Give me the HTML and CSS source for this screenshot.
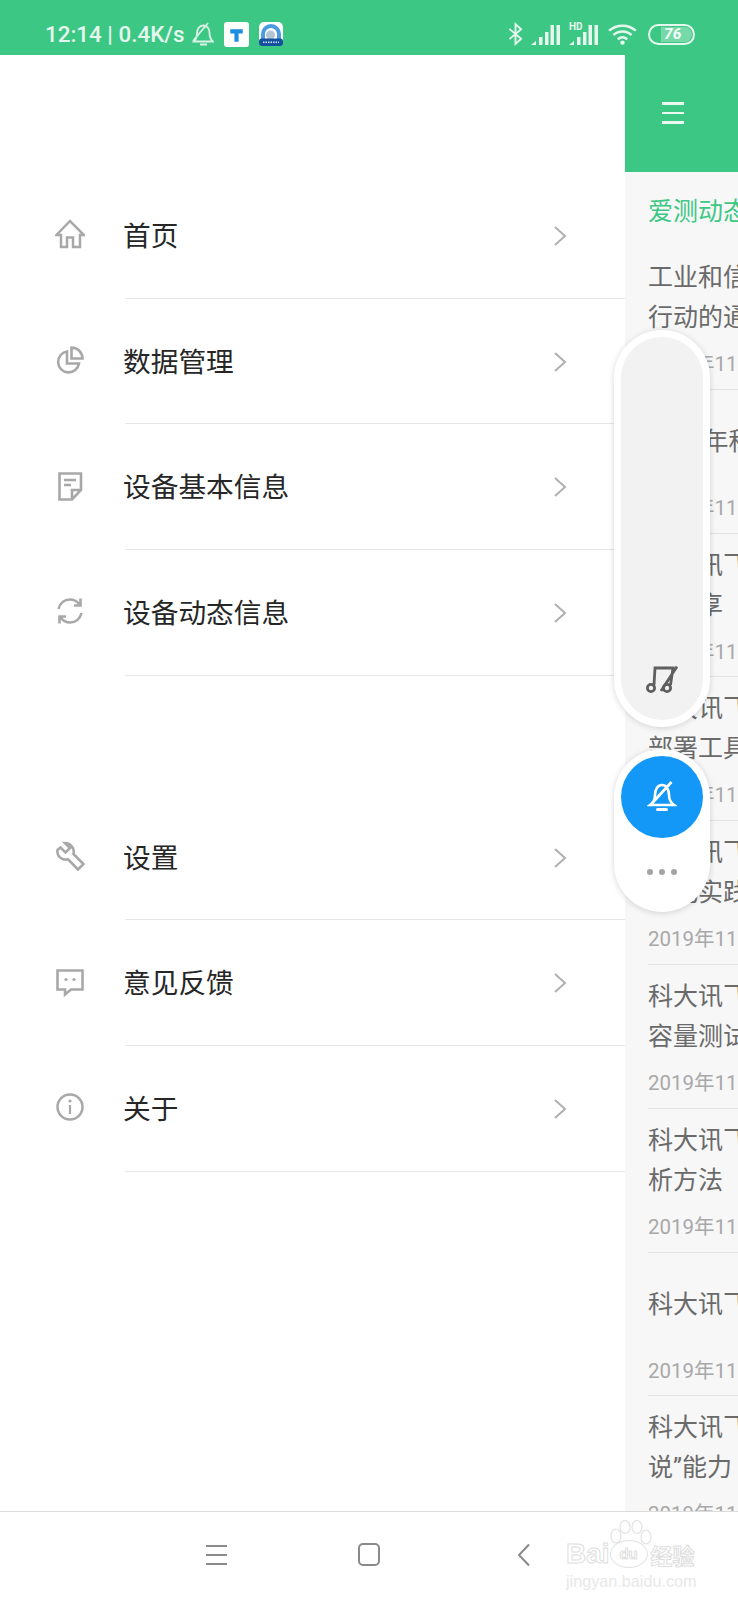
FILE: index.html
```html
<!DOCTYPE html>
<html lang="zh">
<head>
<meta charset="utf-8">
<title>爱测</title>
<link rel="stylesheet" href="styles.css">
</head>
<body>
<div class="screen">
  <header class="status">
    <div class="status-left">
      <span class="clock">12:14 | 0.4K/s</span>
      <svg class="ic-mute" viewBox="0 0 22 24"><path d="M2 19.500h19c-2.500-2-3.500-5-3.500-9C17.500 6 14.500 3.500 11 3.500S5 7 5 11c0 4-1 6.500-3 8.500zM8 22.500h7M1 19 16 1" fill="none" stroke="#d8f3e5" stroke-width="1.800"/></svg>
      <span class="app-t"><svg viewBox="0 0 24 24"><path d="M6 7h12v4h-4v8h-4v-8H6z" fill="#1a8fe3"/></svg></span>
      <span class="app-u"><svg viewBox="0 0 24 24"><rect width="24" height="24" rx="5" fill="#fff"/><path d="M2 17V12a10 10 0 0 1 20 0v5h-4v-5a6 6 0 0 0-12 0v5z" fill="#4a9be0"/><circle cx="11.500" cy="13" r="4.500" fill="#b4c3d1"/><rect y="16.500" width="24" height="7.500" rx="3" fill="#14509e"/><path d="M4 20.300h16" stroke="#cfe2f5" stroke-width="1.500" stroke-dasharray="1.500 1"/></svg></span>
    </div>
    <div class="status-right">
      <svg class="ic-bt" viewBox="0 0 16 24"><path d="M1.500 6.500 14 17l-6 5.500V1.500L14 7 1.500 17.500" fill="none" stroke="#e6f8ee" stroke-width="2"/></svg>
      <svg class="ic-sig" viewBox="0 0 29 21"><path d="M0 21l5-4v4zM8 13h3.500v8H8zM14 8h3.500v13H14zM19.500 1H23v20h-3.500zM25.500 1H29v20h-3.500z" fill="#e6f8ee"/></svg>
      <span class="hd-wrap"><span class="hd">HD</span><svg class="ic-sig" viewBox="0 0 29 21"><path d="M0 21l5-4v4zM8 13h3.500v8H8zM14 8h3.500v13H14zM19.500 1H23v20h-3.500zM25.500 1H29v20h-3.500z" fill="#e6f8ee"/></svg></span>
      <svg class="ic-wifi" viewBox="0 0 30 22"><g fill="none" stroke="#e6f8ee" stroke-width="2.600"><path d="M1 7c8-7 20-7 28 0M5.500 11.500c5.500-5 13.500-5 19 0M10 16c3-2.500 7-2.500 10 0"/></g><circle cx="15" cy="19.500" r="2.300" fill="#e6f8ee"/></svg>
      <span class="batt"><span class="batt-fill">76</span></span>
    </div>
  </header>

  <div class="stage">
    <nav class="drawer">
      <ul class="menu">
        <li class="row">
          <svg class="ic" viewBox="0 0 30 30"><path d="M15 2 1.500 16h4.500v12h6V18.500h6V28h7V16H29z" fill="none" stroke="#a8a8a8" stroke-width="2.500"/></svg>
          <span class="label">首页</span>
          <svg class="chev" viewBox="0 0 14 24"><path d="M2 3l10 9-10 9" fill="none" stroke="#b0b0b0" stroke-width="2"/></svg>
        </li>
        <li class="row">
          <svg class="ic" viewBox="0 0 30 30"><path d="M12 6.500a10.500 10.500 0 1 0 12 12H12z M16.500 2.500a11 11 0 0 1 11 11h-11z" fill="none" stroke="#a8a8a8" stroke-width="2.600"/></svg>
          <span class="label">数据管理</span>
          <svg class="chev" viewBox="0 0 14 24"><path d="M2 3l10 9-10 9" fill="none" stroke="#b0b0b0" stroke-width="2"/></svg>
        </li>
        <li class="row">
          <svg class="ic" viewBox="0 0 30 30"><path d="M26 19V2.500H4.500v26H17zM26 19h-9v9.500M9 9h12M9 14h7" fill="none" stroke="#a8a8a8" stroke-width="2.600"/></svg>
          <span class="label">设备基本信息</span>
          <svg class="chev" viewBox="0 0 14 24"><path d="M2 3l10 9-10 9" fill="none" stroke="#b0b0b0" stroke-width="2"/></svg>
        </li>
        <li class="row">
          <svg class="ic" viewBox="0 0 30 30"><path d="M3.500 13C5 7 9.500 3.500 15 3.500c4 0 7 1.700 9.500 5M26.500 17C25 23 20.500 26.500 15 26.500c-4 0-7-1.700-9.500-5M25.500 2.500V9.500h-6.500M4.500 27.500v-7h6.500" fill="none" stroke="#a8a8a8" stroke-width="2.600"/></svg>
          <span class="label">设备动态信息</span>
          <svg class="chev" viewBox="0 0 14 24"><path d="M2 3l10 9-10 9" fill="none" stroke="#b0b0b0" stroke-width="2"/></svg>
        </li>
      </ul>
      <ul class="menu menu-2">
        <li class="row">
          <svg class="ic" viewBox="0 0 30 30"><path d="M10 2 15 7l-4.500 4.500-5-5L2.500 9c-.5 4 1.500 7.500 5 9 2 .8 4 .8 5.500.3L23 28.500l5.500-5.500L18.500 13c.5-2 .3-4.300-.8-6.300C16 3.700 13.500 2 10 2z" fill="none" stroke="#a8a8a8" stroke-width="2.600"/></svg>
          <span class="label">设置</span>
          <svg class="chev" viewBox="0 0 14 24"><path d="M2 3l10 9-10 9" fill="none" stroke="#b0b0b0" stroke-width="2"/></svg>
        </li>
        <li class="row">
          <svg class="ic" viewBox="0 0 30 30"><path d="M2.500 3.500h25v19H16l-6 5v-5H2.500z" fill="none" stroke="#a8a8a8" stroke-width="2.600"/><circle cx="11" cy="12.500" r="1.600" fill="#a8a8a8"/><circle cx="19" cy="12.500" r="1.600" fill="#a8a8a8"/></svg>
          <span class="label">意见反馈</span>
          <svg class="chev" viewBox="0 0 14 24"><path d="M2 3l10 9-10 9" fill="none" stroke="#b0b0b0" stroke-width="2"/></svg>
        </li>
        <li class="row">
          <svg class="ic" viewBox="0 0 30 30"><circle cx="15" cy="15" r="12.500" fill="none" stroke="#a8a8a8" stroke-width="2.500"/><path d="M15 13v9" stroke="#a8a8a8" stroke-width="2.200"/><circle cx="15" cy="9" r="1.600" fill="#a8a8a8"/></svg>
          <span class="label">关于</span>
          <svg class="chev" viewBox="0 0 14 24"><path d="M2 3l10 9-10 9" fill="none" stroke="#b0b0b0" stroke-width="2"/></svg>
        </li>
      </ul>
    </nav>

    <main class="peek">
      <div class="peek-bar">
        <span class="burger"><i></i><i></i><i></i></span>
      </div>
      <div class="peek-body">
        <h2 class="peek-title">爱测动态</h2>
        <article class="news"><p>工业和信息化部<br>行动的通知</p><time>2019年11月</time></article>
        <article class="news news-single"><p>2019年科大讯飞</p><time>2019年11月</time></article>
        <article class="news"><p>科大讯飞实践<br>与分享</p><time>2019年11月</time></article>
        <article class="news"><p>科大讯飞测试<br>部署工具</p><time>2019年11月</time></article>
        <article class="news"><p>科大讯飞测试<br>优化实践</p><time>2019年11月</time></article>
        <article class="news"><p>科大讯飞测试<br>容量测试</p><time>2019年11月</time></article>
        <article class="news"><p>科大讯飞测试<br>析方法</p><time>2019年11月</time></article>
        <article class="news news-single"><p>科大讯飞测试</p><time>2019年11月</time></article>
        <article class="news"><p>科大讯飞测试<br>说<span class="q">”</span>能力</p><time>2019年11月</time></article>
      </div>
    </main>

    <aside class="float-music">
      <svg viewBox="0 0 32 30"><circle cx="5" cy="23" r="3.600" fill="none" stroke="#5f5f5f" stroke-width="2.800"/><circle cx="21" cy="23" r="3.600" fill="none" stroke="#5f5f5f" stroke-width="2.800"/><path d="M8 20 9 3H27L24.500 20M31 1.500 15 26" fill="none" stroke="#5f5f5f" stroke-width="2.800"/></svg>
    </aside>
    <aside class="float-bell">
      <span class="bell-disc"><svg viewBox="0 0 30 32"><path d="M3 24c3-2 5-5 5-10C8 8 11 4 15 4s7 4 7 10c0 5 2 8 5 10zM24.500 1 3 24.500" fill="none" stroke="#fff" stroke-width="2.600"/><path d="M10.500 28.500h9" stroke="#fff" stroke-width="3" stroke-linecap="round"/></svg></span>
      <span class="dots"><i></i><i></i><i></i></span>
    </aside>
  </div>

  <footer class="navbar">
    <span class="nav-burger"><i></i><i></i><i></i></span>
    <span class="nav-home"></span>
    <svg class="nav-back" viewBox="0 0 14 24"><path d="M12 1.500 2 12l10 10.500" fill="none" stroke="#8a8a8a" stroke-width="2"/></svg>
    <div class="wm">
      <svg class="wm-paw" viewBox="0 0 42 38"><g fill="#fff" stroke="#e2e2e2" stroke-width="1.200"><ellipse cx="6" cy="16" rx="5" ry="7"/><ellipse cx="15" cy="7" rx="5" ry="6.500"/><ellipse cx="27" cy="7" rx="5" ry="6.500"/><ellipse cx="36" cy="17" rx="5" ry="7"/></g></svg>
      <div class="wm-top"><span>Bai</span><span class="wm-du">du</span><span class="wm-cn">经验</span></div>
      <span class="wm-sub">jingyan.baidu.com</span>
    </div>
  </footer>
</div>
</body>
</html>
```

FILE: styles.css
```css
* { box-sizing: border-box; margin: 0; padding: 0; }
html, body { width: 738px; height: 1600px; overflow: hidden; background: #fff; }
body { font-family: "Noto Sans CJK SC", "Noto Sans", sans-serif; }
ul { list-style: none; }
.screen { width: 738px; height: 1600px; display: flex; flex-direction: column; }

.status { height: 55px; flex: none; background: #3dc785; display: flex; justify-content: space-between; align-items: center; padding: 13px 43px 0 45px; color: #e6f8ee; }
.status-left, .status-right { display: flex; align-items: center; }
.clock { font-family: Roboto, sans-serif; font-size: 22.400px; font-weight: 500; white-space: nowrap; }
.ic-mute { width: 22px; height: 24px; margin-left: 7px; }
.app-t { width: 25px; height: 25px; border-radius: 3px; background: #fff; margin-left: 10px; display: flex; }
.app-t svg { width: 25px; height: 25px; }
.app-u { width: 24px; height: 24px; margin-left: 10px; display: flex; }
.app-u svg { width: 24px; height: 24px; }
.ic-bt { width: 15px; height: 24px; margin-right: 8px; }
.ic-sig { width: 29px; height: 21px; display: block; }
.hd-wrap { position: relative; margin-left: 9px; }
.hd { position: absolute; left: 0; top: -2px; font: 700 10px/10px Roboto, sans-serif; background: #3dc785; padding-right: 2px; }
.ic-wifi { width: 29px; height: 21px; margin-left: 10px; }
.batt { width: 47px; height: 21px; margin-left: 11px; border: 2px solid #e6f8ee; border-radius: 11px; padding: 1px 1px 1px 11px; display: flex; }
.batt-fill { width: 32px; background: rgba(255,255,255,.3); border-radius: 0 8px 8px 0; font: italic 700 15.500px/15px Roboto, sans-serif; color: #f4fff9; padding-left: 3px; }

.stage { position: relative; flex: 1; display: flex; min-height: 0; }
.drawer { width: 625px; flex: none; padding-top: 118px; background: #fff; }
.menu-2 { margin-top: 119px; }
.row { height: 125.700px; display: flex; align-items: center; padding: 0 55px 4px; position: relative; }
.row::after { content: ""; position: absolute; left: 125px; right: 0; bottom: 0; height: 1px; background: #e7e7e7; }
.ic { width: 30px; height: 30px; flex: none; margin-top: 1px; }
.label { margin-left: 38px; flex: 1; font-size: 27.700px; line-height: 36px; color: #262626; }
.chev { width: 14px; height: 24px; flex: none; margin: 4px 3px 0 0; }

.peek { width: 113px; flex: none; background: #f7f7f7; overflow: hidden; display: flex; flex-direction: column; }
.peek-bar { height: 117px; flex: none; background: #3dc785; padding: 47px 0 0 37px; }
.burger { display: block; width: 22px; }
.burger i { display: block; height: 2.500px; background: #e9fbf1; margin-bottom: 7px; }
.peek-body { padding: 20px 0 0 23px; width: 340px; }
.peek-title { font-size: 25px; font-weight: 400; line-height: 34px; color: #3dc785; margin-bottom: 20px; white-space: nowrap; }
.news { height: 143.800px; border-bottom: 1px solid #e2e2e2; padding-top: 9px; }
.news p { height: 80px; font-size: 25px; line-height: 40px; color: #6a6a6a; white-space: nowrap; }
.news-single p { padding-top: 20px; }
.news time { display: block; margin-top: 16px; font-family: Roboto, "Noto Sans CJK SC", sans-serif; font-size: 20.500px; line-height: 26px; color: #a8a8a8; white-space: nowrap; }
.q { font-family: Roboto, sans-serif; }

.float-music { position: absolute; left: 614px; top: 275px; width: 96px; height: 397px; border-radius: 48px; background: #f2f2f2; border: 7px solid #fff; box-shadow: 0 1px 6px rgba(0,0,0,.16); display: flex; align-items: flex-end; justify-content: center; padding-bottom: 25px; }
.float-music svg { width: 32px; height: 30px; }
.float-bell { position: absolute; left: 614px; top: 694px; width: 96px; height: 163px; border-radius: 48px; background: #fff; box-shadow: 0 1px 6px rgba(0,0,0,.16); padding: 7px 7px 0; display: flex; flex-direction: column; align-items: center; }
.bell-disc { width: 82px; height: 82px; flex: none; border-radius: 50%; background: #1398f7; display: flex; align-items: center; justify-content: center; }
.bell-disc svg { width: 30px; height: 32px; }
.dots { display: flex; gap: 6px; margin-top: 31px; }
.dots i { width: 6px; height: 6px; border-radius: 50%; background: #a3a3a3; }

.navbar { height: 89px; flex: none; position: relative; background: #fff; border-top: 1px solid #dcdcdc; display: flex; align-items: center; padding: 0 0 3px 206px; }
.nav-burger { width: 21px; display: block; }
.nav-burger i { display: block; height: 2px; background: #8a8a8a; margin: 7px 0; }
.nav-home { width: 22px; height: 23px; margin-left: 131px; border: 2px solid #8a8a8a; border-radius: 5px; }
.nav-back { width: 14px; height: 24px; margin-left: 137px; }
.wm { position: absolute; left: 566px; top: 3px; width: 134px; height: 75px; display: flex; flex-direction: column; align-items: flex-start; }
.wm-paw { position: absolute; left: 44px; top: 5px; width: 42px; height: 38px; }
.wm-top { display: flex; align-items: center; margin-top: 26px; height: 26px; font: 700 28px/26px "Liberation Sans", sans-serif; color: #fff; -webkit-text-stroke: 1px #dedede; white-space: nowrap; position: relative; }
.wm-du { width: 38px; height: 28px; border: 1px solid #e2e2e2; border-radius: 50%; margin: 0 3px 0 0; background: #fff; font-size: 15px; text-align: center; }
.wm-cn { font-family: "Noto Sans CJK SC", sans-serif; font-size: 22px; }
.wm-sub { font: 16.200px/18px "Liberation Sans", sans-serif; margin-top: 5px; color: #e8e8e8; white-space: nowrap; }
```
